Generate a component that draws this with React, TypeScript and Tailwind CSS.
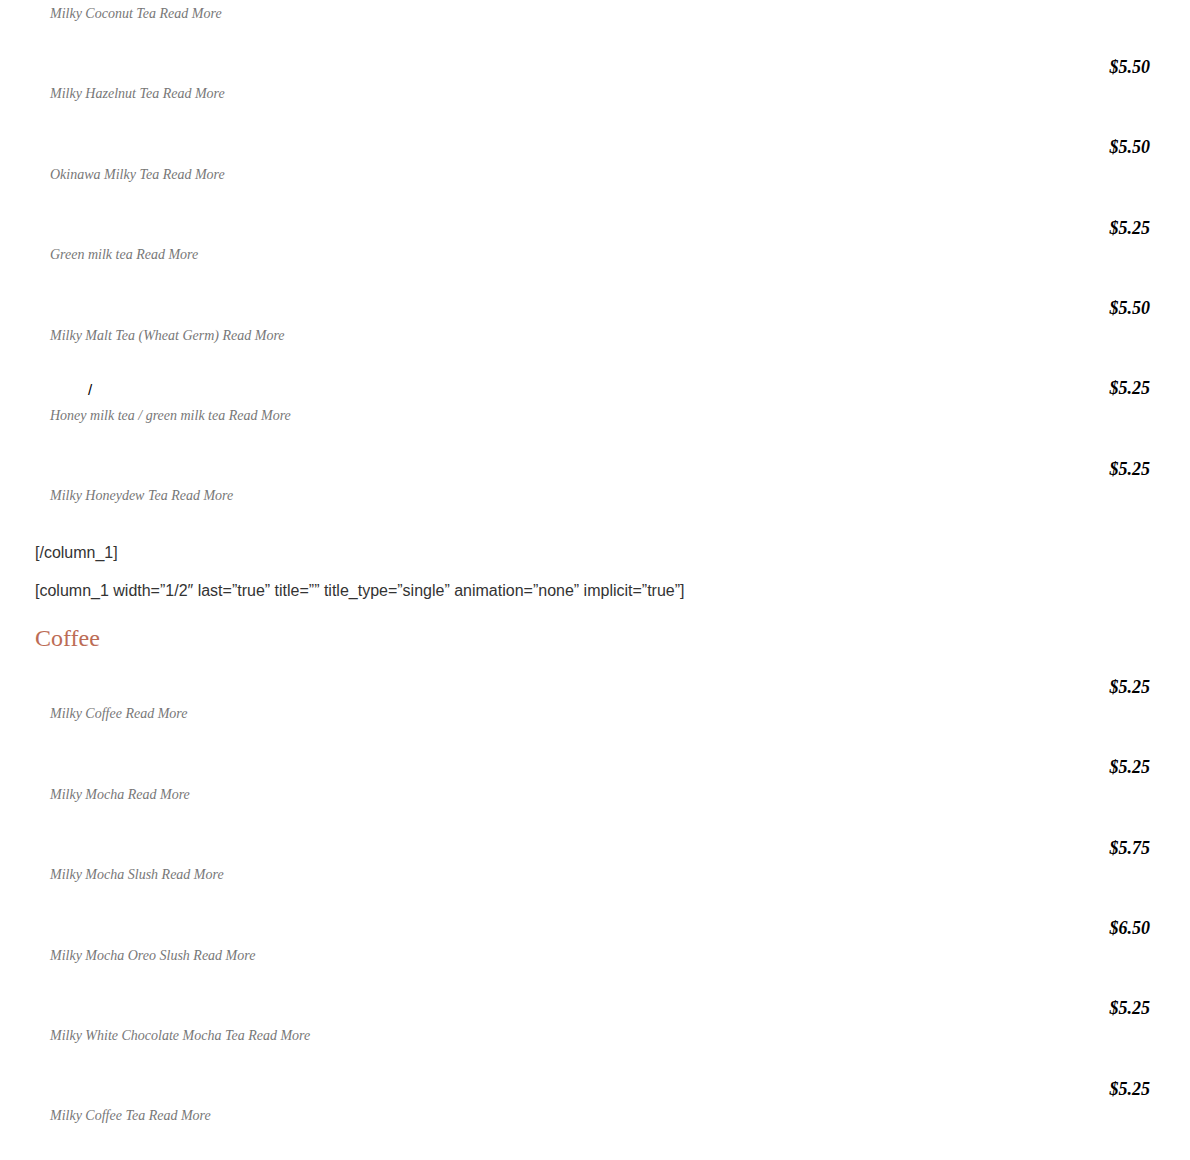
import React from "react";

type Item = { name: string; price: string; title?: string };

const teaItems: Item[] = [
  { name: "Milky Hazelnut Tea", price: "$5.50" },
  { name: "Okinawa Milky Tea", price: "$5.50" },
  { name: "Green milk tea", price: "$5.25" },
  { name: "Milky Malt Tea (Wheat Germ)", price: "$5.50" },
  { name: "Honey milk tea / green milk tea", price: "$5.25", title: "/" },
  { name: "Milky Honeydew Tea", price: "$5.25" },
];

const coffeeItems: Item[] = [
  { name: "Milky Coffee", price: "$5.25" },
  { name: "Milky Mocha", price: "$5.25" },
  { name: "Milky Mocha Slush", price: "$5.75" },
  { name: "Milky Mocha Oreo Slush", price: "$6.50" },
  { name: "Milky White Chocolate Mocha Tea", price: "$5.25" },
  { name: "Milky Coffee Tea", price: "$5.25" },
];

function Desc({ name }: { name: string }) {
  return (
    <p className="pl-[15px] text-[14px] leading-[28px] italic text-[#777] font-['Liberation_Serif',serif]">
      {name} <a href="#" className="text-[#777]">Read More</a>
    </p>
  );
}

function MenuItem({ item }: { item: Item }) {
  return (
    <div className="mb-[26.4px]">
      <div className="flex items-center justify-between h-[26px] pl-[15px]">
        <span className="pl-[38px] pt-[3px] text-[15px] text-black font-['Liberation_Sans',sans-serif]">
          {item.title ?? ""}
        </span>
        <span className="text-[18px] font-bold italic text-black font-['Liberation_Serif',serif]">
          {item.price}
        </span>
      </div>
      <Desc name={item.name} />
    </div>
  );
}

export default function App() {
  return (
    <div className="min-h-screen bg-white pl-[35px] pr-[40px] overflow-hidden">
      <div className="mb-[26.4px]">
        <Desc name="Milky Coconut Tea" />
      </div>
      {teaItems.map((item) => (
        <MenuItem key={item.name} item={item} />
      ))}
      {/* margins collapse with the last item's mb, so this one carries the whole gap */}
      <p className="mt-[30.5px] text-[16px] leading-[24px] text-[#333] font-['Liberation_Sans',sans-serif]">
        [/column_1]
      </p>
      <p className="mt-[14px] text-[16px] leading-[24px] text-[#333] font-['Liberation_Sans',sans-serif]">
        [column_1 width=”1/2″ last=”true” title=”” title_type=”single” animation=”none” implicit=”true”]
      </p>
      <h3 className="mt-[20px] mb-[21.5px] text-[24px] leading-[30px] text-[#bc6c55] font-['Liberation_Serif',serif]">
        Coffee
      </h3>
      {coffeeItems.map((item) => (
        <MenuItem key={item.name} item={item} />
      ))}
    </div>
  );
}
